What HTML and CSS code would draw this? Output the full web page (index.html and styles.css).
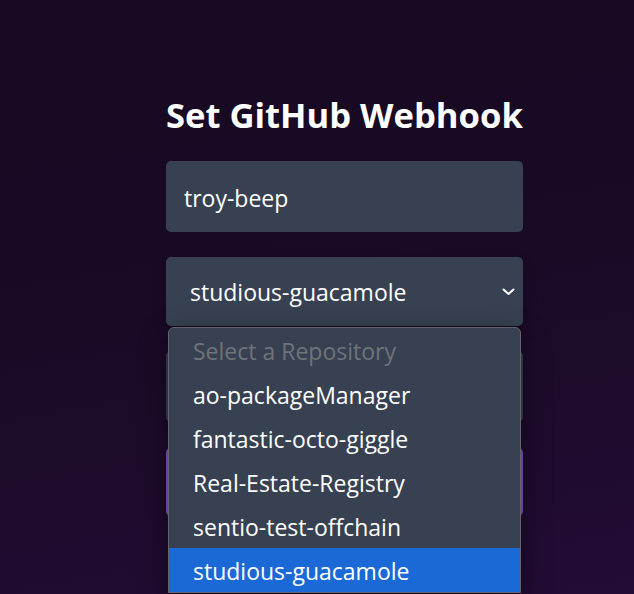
FILE: index.html
```html
<!DOCTYPE html>
<html lang="en">
<head>
<meta charset="utf-8">
<title>Set GitHub Webhook</title>
<link rel="stylesheet" href="styles.css">
</head>
<body>
<main class="page">
  <form class="form">
    <h1 class="title">Set GitHub Webhook</h1>
    <div class="field input">troy-beep</div>
    <div class="select-wrap">
      <div class="field select">
        <span>studious-guacamole</span>
        <svg class="chev" width="13" height="8" viewBox="0 0 13 8"><path d="M1.5 1.5 L6.5 6 L11.5 1.5" fill="none" stroke="#fff" stroke-width="2" stroke-linecap="round" stroke-linejoin="round"/></svg>
      </div>
      <ul class="dropdown">
        <li class="opt placeholder">Select a Repository</li>
        <li class="opt">ao-packageManager</li>
        <li class="opt">fantastic-octo-giggle</li>
        <li class="opt">Real-Estate-Registry</li>
        <li class="opt">sentio-test-offchain</li>
        <li class="opt selected">studious-guacamole</li>
      </ul>
    </div>
    <div class="field input"></div>
    <div class="button"></div>
  </form>
</main>
</body>
</html>
```
FILE: styles.css
```css
html, body {
  margin: 0;
  height: 100%;
}
body {
  background: linear-gradient(170deg, #170a21 0%, #190a25 45%, #230c35 100%);
  font-family: "Open Sans", "Noto Sans", sans-serif;
  color: #fff;
  overflow: hidden;
}
.page {
  padding: 92px 0 0 166px;
}
.form {
  width: 357px;
  display: flex;
  flex-direction: column;
  gap: 25px;
}
.title {
  margin: 0 0 -1px 0;
  font-size: 34.6px;
  line-height: 45px;
  font-weight: 700;
  white-space: nowrap;
}
.field {
  background: #374151;
  border-radius: 5px;
  box-sizing: border-box;
  font-size: 23px;
  color: #fff;
}
.input {
  height: 71px;
  padding: 2px 18px 0;
  display: flex;
  align-items: center;
}
.select-wrap {
  position: relative;
}
.select {
  height: 69px;
  padding: 0 8px 0 24px;
  display: flex;
  align-items: center;
  justify-content: space-between;
  box-shadow: 0 6px 14px rgba(0,0,0,0.25);
}
.chev {
  display: block;
}
.button {
  height: 70px;
  border-radius: 6px;
  background: #8b4fd0;
}
.dropdown {
  position: absolute;
  top: 70px;
  left: 2px;
  right: 2px;
  margin: 0;
  padding: 0;
  list-style: none;
  background: #374151;
  border: 1px solid #62656c;
  border-radius: 6px 6px 0 0;
  box-shadow: 0 10px 30px rgba(0,0,0,0.45);
  z-index: 5;
}
.opt {
  height: 44px;
  display: flex;
  align-items: center;
  padding: 1px 0 0 24px;
  box-sizing: border-box;
  font-size: 23px;
  color: #fff;
}
.placeholder {
  color: #6f737a;
}
.selected {
  background: #1a69d6;
}
```
